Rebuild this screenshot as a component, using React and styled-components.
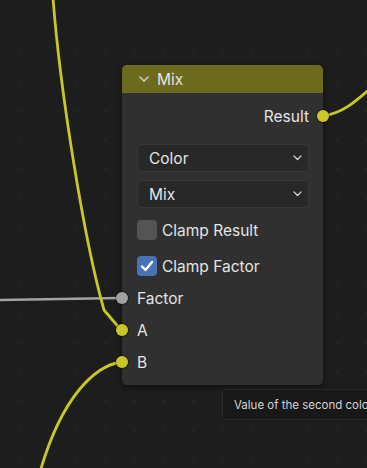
import React from "react";
import styled, { createGlobalStyle } from "styled-components";

const Global = createGlobalStyle`
  html, body { margin: 0; padding: 0; background: #1d1d1d; }
  body { font-family: Inter, "Noto Sans", sans-serif; }
`;

const Canvas = styled.div`
  position: relative;
  width: 367px;
  height: 468px;
  overflow: hidden;
  background-color: #1d1d1d;
  background-image: radial-gradient(circle, #272727 0.9px, transparent 1.4px);
  background-size: 29px 29px;
  background-position: 4.5px 9.5px;
`;

const Wires = styled.svg`
  position: absolute;
  left: 0;
  top: 0;
  width: 367px;
  height: 468px;
`;

const Node = styled.div`
  position: absolute;
  left: 122px;
  top: 65px;
  width: 201px;
  height: 320px;
  border-radius: 5px;
  background: #303030;
  box-shadow: 0 2px 6px rgba(0, 0, 0, 0.45);
  display: flex;
  flex-direction: column;
  color: #e4e4e4;
  font-size: 15.5px;
`;

const Header = styled.div`
  height: 28px;
  background: #6b6a1d;
  border-radius: 5px 5px 0 0;
  display: flex;
  align-items: center;
  gap: 8px;
  padding-left: 17px;
  box-sizing: border-box;
`;

const Body = styled.div`
  display: flex;
  flex-direction: column;
  padding: 0 14px 0 15px;
`;

const Row = styled.div`
  position: relative;
  height: ${(p) => p.$h || 32}px;
  margin-top: ${(p) => p.$mt || 0}px;
  display: flex;
  align-items: center;
  justify-content: ${(p) => (p.$right ? "flex-end" : "flex-start")};
  gap: 5px;
`;

const Socket = styled.div`
  position: absolute;
  top: 50%;
  width: 12px;
  height: 12px;
  margin-top: -6px;
  border-radius: 50%;
  background: ${(p) => p.$color};
  box-shadow: 0 0 0 1px rgba(0, 0, 0, 0.35);
  ${(p) => (p.$side === "right" ? "right: -20px;" : "left: -21px;")}
`;

const Select = styled.div`
  height: 28px;
  box-sizing: border-box;
  margin-top: ${(p) => p.$mt || 0}px;
  border-radius: 5px;
  background: #282828;
  border: 1px solid #383838;
  display: flex;
  align-items: center;
  justify-content: space-between;
  padding: 0 6px 0 11px;
`;

const Box = styled.div`
  width: 20px;
  height: 20px;
  border-radius: 4px;
  background: ${(p) => (p.$on ? "#4772b3" : "#545454")};
  display: flex;
  align-items: center;
  justify-content: center;
`;

const Label = styled.span`
  line-height: 1;
  padding-top: 2px;
`;

const Tooltip = styled.div`
  position: absolute;
  left: 222px;
  top: 389px;
  width: 180px;
  height: 31px;
  box-sizing: border-box;
  border-radius: 4px;
  background: #181818;
  border: 1px solid #292929;
  color: #d4d4d4;
  font-size: 11.5px;
  display: flex;
  align-items: center;
  padding-left: 11px;
  white-space: nowrap;
`;

const Chevron = ({ size = 10, color = "#dcdcdc" }) => (
  <svg width={size} height={size * 0.6} viewBox="0 0 10 6">
    <path d="M1 1 L5 5 L9 1" fill="none" stroke={color} strokeWidth="1.4" strokeLinecap="round" strokeLinejoin="round" />
  </svg>
);

const Check = () => (
  <svg width="14" height="12" viewBox="0 0 14 12">
    <path d="M2 6.5 L5.5 10 L12 2" fill="none" stroke="#fff" strokeWidth="2.4" strokeLinecap="round" strokeLinejoin="round" />
  </svg>
);

const YELLOW = "#c7c729";

export default function App() {
  return (
    <>
      <Global />
      <Canvas>
        <Wires viewBox="0 0 367 468">
          <path d="M0 300 L121 298" stroke="#a3a3a3" strokeWidth="2.5" fill="none" />
          <path d="M53 -2 C60 90, 84 240, 104 310 L121 330" stroke={YELLOW} strokeWidth="2.8" fill="none" />
          <path d="M121 362 C95 366, 62 396, 40 472" stroke={YELLOW} strokeWidth="2.8" fill="none" />
          <path d="M323 116 C343 113, 355 102, 372 87" stroke={YELLOW} strokeWidth="2.8" fill="none" />
        </Wires>
        <Node>
          <Header>
            <Chevron />
            <Label>Mix</Label>
          </Header>
          <Body>
            <Row $h={26} $mt={10} $right>
              <Label>Result</Label>
              <Socket $side="right" $color={YELLOW} />
            </Row>
            <Select $mt={15}>
              <Label>Color</Label>
              <Chevron size={9} />
            </Select>
            <Select $mt={8}>
              <Label>Mix</Label>
              <Chevron size={9} />
            </Select>
            <Row $h={20} $mt={12}>
              <Box />
              <Label>Clamp Result</Label>
            </Row>
            <Row $h={20} $mt={16}>
              <Box $on>
                <Check />
              </Box>
              <Label>Clamp Factor</Label>
            </Row>
            <Row $mt={6}>
              <Socket $color="#a1a1a1" />
              <Label>Factor</Label>
            </Row>
            <Row>
              <Socket $color={YELLOW} />
              <Label>A</Label>
            </Row>
            <Row>
              <Socket $color={YELLOW} />
              <Label>B</Label>
            </Row>
          </Body>
        </Node>
        <Tooltip>Value of the second color</Tooltip>
      </Canvas>
    </>
  );
}
